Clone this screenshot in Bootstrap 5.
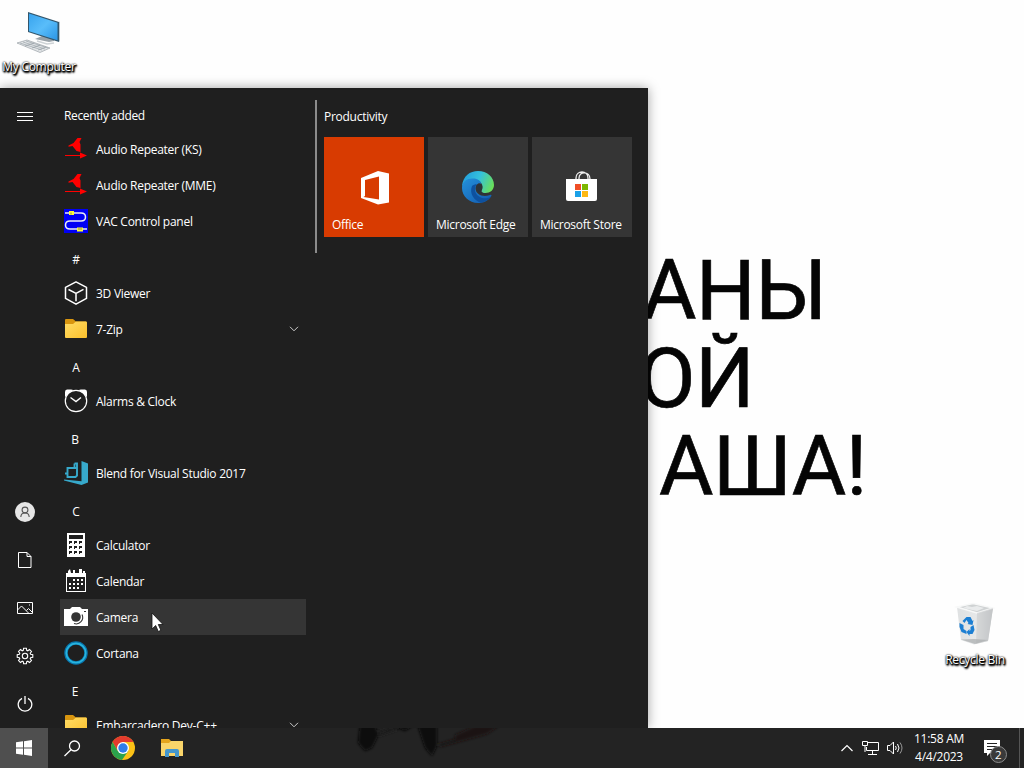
<!DOCTYPE html>
<html lang="en">
<head>
<meta charset="utf-8">
<meta name="viewport" content="width=device-width, initial-scale=1">
<title>Desktop</title>
<link href="https://cdn.jsdelivr.net/npm/bootstrap@5.3.0/dist/css/bootstrap.min.css" rel="stylesheet">
<style>
body{font-family:"Open Sans","Noto Sans",sans-serif;font-size:12px;line-height:16px;letter-spacing:-.27px;background:#fefefe}
svg{display:block;flex:none}
.wall-text{left:640px;top:247px;font:400 83.500px/88px Roboto,sans-serif;color:#050505;letter-spacing:-.5px;-webkit-text-stroke:.7px #050505}
.wall-text div{white-space:nowrap}
.w1{margin-left:2px}.w2{margin-left:-2px}.w3{margin-left:19px}
.desk-icon{width:80px}
.desk-label{color:#fff;line-height:14px;text-shadow:0 0 2px #000,1px 1px 2px #000,1px 1px 1px #000,0 1px 2px #000,1px 2px 2px #000;white-space:nowrap}
.start-menu{width:648px;height:640px;background:#1f1f1f;color:#fff;box-shadow:0 0 11px rgba(0,0,0,.36)}
.rail{width:50px}
.rail-item{height:48px}
.app-list{width:246px;margin-left:10px;padding-top:7px}
.app-row{height:36px;padding-left:4px;gap:8px;flex:none;white-space:nowrap}
.app-row span{padding-top:2px}
.app-row.hovered{background:#353535}
.app-row .chev{margin-left:auto;margin-right:7px}
.app-head{height:36px;width:32px;flex:none;padding-top:5px;white-space:nowrap}
.split{width:2px;height:153px;background:#8b8b8b;margin:12px 7px 0 9px}
.tile{width:100px;height:100px;background:#353535}
.tile svg{position:absolute;left:34px;top:34px}
.tile-name{position:absolute;left:8px;bottom:4px;white-space:nowrap}
.task-bar{height:40px;background:#232323;color:#fff}
.start-btn{width:48px;background:#4f4f4f}
.clock{width:60px;line-height:18px;white-space:nowrap}
.cursor{left:151px;top:612px}
.show-desk{width:1px;background:#555}
</style>
</head>
<body class="vh-100 overflow-hidden d-flex flex-column">
<main class="flex-grow-1 position-relative">
  <div class="wall-text position-absolute">
    <div class="w1">АНЫ</div><div class="w2">ОЙ</div><div class="w3">АША!</div>
  </div>

  <div class="desk-icon position-absolute d-flex flex-column align-items-center" style="left:-1px;top:10px">
    <svg width="48" height="48" viewBox="0 0 48 48">
      <defs><linearGradient id="scr" x1="0" y1="0" x2="1" y2="1"><stop offset="0" stop-color="#37a3ee"/><stop offset=".5" stop-color="#59bdfa"/><stop offset="1" stop-color="#2a95e6"/></linearGradient></defs>
      <path d="M20 29l14 3 5-1 0-2-12-3z" fill="#9aa3a9"/><path d="M22 31l10 3 7-1" fill="none" stroke="#cdd2d5" stroke-width="1.5"/>
      <path d="M13 2l31 10v20L13 22z" fill="#33566c"/><path d="M14 3.500l28.500 9.200v17.600L14 21.300z" fill="url(#scr)"/><path d="M44 12v20l1-1V11.500z" fill="#bcc8cf"/>
      <path d="M2 33l10-3 23 8-10 4.500z" fill="#e2e5e7" stroke="#9ba2a7" stroke-width=".7"/><path d="M5 33l22 7M8 32l22 7M11 31l22 7M10 36l9-3M17 38l8-3M23 40l8-3" stroke="#8d979d" stroke-width=".6"/>
    </svg>
    <div class="desk-label" style="margin-top:2px">My Computer</div>
  </div>

  <div class="desk-icon position-absolute d-flex flex-column align-items-center" style="left:935px;top:602px">
    <svg width="48" height="48" viewBox="0 0 48 48">
      <defs><linearGradient id="bin" x1="0" x2="1"><stop offset="0" stop-color="#dfe1e2"/><stop offset=".55" stop-color="#e6e8e9"/><stop offset="1" stop-color="#b9bcbe"/></linearGradient></defs>
      <path d="M6 5L22 2l20 4-5 33-14 3.500L10 38z" fill="url(#bin)"/>
      <path d="M6 5L22 1.500 42 6 26 11z" fill="#cfd2d3" stroke="#f7f8f8" stroke-width="1.500"/>
      <path d="M12 6l4-2 5 1 5-1 7 2-7 3z" fill="#e9ebec"/>
      <path d="M26 11l16-5-5 33-12 3z" fill="#c9cccd" opacity=".6"/><path d="M10 37.500L24 42l13-4-14-1z" fill="#a9acae" opacity=".7"/>
      <g fill="#1c7fd3" transform="translate(-1.500 -1)"><path d="M13 20l4-4h4l2 4 1-1-1 5-5-1 1-1-2-3-2 3z"/><path d="M10 22l4 2v4l3 2v3l-5-2-2-5z"/><path d="M24 24l1 5-2 4-3 0v2l-3-4 3-3v2l1-1 0-3z"/></g>
    </svg>
    <div class="desk-label" style="margin-top:3px">Recycle Bin</div>
  </div>

  <section class="start-menu position-absolute start-0 bottom-0 d-flex overflow-visible">
    <nav class="rail d-flex flex-column">
      <div class="rail-item d-flex justify-content-center" style="padding-top:24px"><svg width="16" height="10" stroke="#fff"><path d="M0 .5h16M0 4.500h16M0 8.500h16"/></svg></div>
      <div class="mt-auto rail-item d-flex align-items-center justify-content-center"><svg width="20" height="20"><circle cx="10" cy="10" r="10" fill="#e6e6e6"/><g fill="none" stroke="#555" stroke-width="1.100"><circle cx="10" cy="8" r="2.900"/><path d="M5.800 15c.3-5.300 8.100-5.300 8.400 0"/></g></svg></div>
      <div class="rail-item d-flex align-items-center justify-content-center"><svg width="16" height="16" fill="none" stroke="#fff"><path d="M1.500.5H10l4 4v11H1.500zM10 .5v4h4"/></svg></div>
      <div class="rail-item d-flex align-items-center justify-content-center"><svg width="16" height="12" fill="none" stroke="#fff"><path d="M.5.500h15v11H.5zM.5 8l4-4 7.500 7.500M9.500 8.500l2-2 4 4"/><path d="M12 3h1"/></svg></div>
      <div class="rail-item d-flex align-items-center justify-content-center"><svg width="18" height="18" viewBox="-9 -9 18 18" fill="none" stroke="#fff" stroke-width="1.100"><path id="gear"/><circle r="2.700"/></svg></div>
      <div class="rail-item d-flex align-items-center justify-content-center"><svg width="16" height="18" fill="none" stroke="#fff" stroke-width="1.300"><path d="M8 1v8M5 3.300a6.800 6.800 0 1 0 6 0"/></svg></div>
    </nav>

    <div class="app-list d-flex flex-column overflow-hidden">
      <div class="app-head d-flex align-items-center" style="padding-left:4px;padding-top:6px;letter-spacing:-.36px"><span>Recently added</span></div>
      <div class="app-row d-flex align-items-center"><svg width="24" height="24" fill="red"><path d="M4.500 8.500l5-2.500 4-5h4L15.500 5l1 2.500V15l-4-1-4-5-4 .8zM1 18h15v-2.500l7 3-7 3V19H1z"/></svg><span>Audio Repeater (KS)</span></div>
      <div class="app-row d-flex align-items-center"><svg width="24" height="24" fill="red"><path d="M4.500 8.500l5-2.500 4-5h4L15.500 5l1 2.500V15l-4-1-4-5-4 .8zM1 18h15v-2.500l7 3-7 3V19H1z"/></svg><span>Audio Repeater (MME)</span></div>
      <div class="app-row d-flex align-items-center"><svg width="24" height="24"><path fill="#0000f4" d="M0 0h24v24H0z"/><path d="M1 4h16c6 0 6 8 0 8H6c-6 0-6 8 0 8h17" fill="none" stroke="#e9ecf5" stroke-width="1.500"/><path d="M5 2h5v4H5zM13 18.500h6v4h-6z" fill="#ff3"/><path d="M7 3.500v2M15 19v2M17 19v2" stroke="#885"/></svg><span>VAC Control panel</span></div>
      <div class="app-head d-flex align-items-center justify-content-center">#</div>
      <div class="app-row d-flex align-items-center"><svg width="24" height="24" fill="none" stroke="#fff" stroke-width="1.500" stroke-linejoin="round"><path d="M12 .9l10.500 5.500v11L12 23.200 1.500 17.400v-11zM4.500 8.500L12 12.300l7.500-4M12 12.300v8"/></svg><span>3D Viewer</span></div>
      <div class="app-row d-flex align-items-center"><svg width="24" height="24"><defs><linearGradient id="fold" x1="0" x2="1" y2="1"><stop offset="0" stop-color="#ffdc66"/><stop offset="1" stop-color="#fbc02c"/></linearGradient></defs><path d="M1 3q0-1 1-1h7l3 2.500h10V9H1z" fill="#d8950f"/><path d="M1 7h8l3-2.500h10q1 0 1 1V20q0 1-1 1H2q-1 0-1-1z" fill="url(#fold)"/></svg><span>7-Zip</span><svg class="chev" width="10" height="6" fill="none" stroke="#ccc"><path d="M1 .8l4 4 4-4"/></svg></div>
      <div class="app-head d-flex align-items-center justify-content-center">A</div>
      <div class="app-row d-flex align-items-center"><svg width="24" height="24"><path d="M1 8V3q0-2.500 2-2.500h4q2 0 2 1zM23 8V3q0-2.500-2-2.500h-4q-2 0-2 1z" fill="#fff"/><circle cx="12" cy="12" r="10.700" fill="#1f1f1f" stroke="#fff" stroke-width="1.200"/><path d="M6.500 8.500L12 12.500l5-4" fill="none" stroke="#fff" stroke-width="1.400"/></svg><span>Alarms &amp; Clock</span></div>
      <div class="app-head d-flex align-items-center justify-content-center" style="padding-right:2px">B</div>
      <div class="app-row d-flex align-items-center"><svg width="24" height="24"><path d="M17.500 0L24 2.500v19L17.500 24 0 19.500v-1l17.500 1.700z" fill="#37a9cb"/><path d="M3.500 7H13v7.500L11.500 16H3.500zM10.500 2.500V6M1 12.500h2.500v3M10.500 2.500H13V7" fill="none" stroke="#37a9cb" stroke-width="1.900"/></svg><span>Blend for Visual Studio 2017</span></div>
      <div class="app-head d-flex align-items-center justify-content-center">C</div>
      <div class="app-row d-flex align-items-center"><svg width="24" height="24"><path d="M3 0h18v24H3z" fill="#fff"/><path d="M5 2h14v4H5z" fill="#1f1f1f"/><path d="M5 8h3v2H6v1H5zM10 8h3v2h-2v1h-1zM15 8h3v2h-2v1h-1zM5 13h3v2H6v1H5zM10 13h3v2h-2v1h-1zM15 13h3v2h-2v1h-1zM5 18h3v2H6v1H5zM10 18h3v2h-2v1h-1zM15 18h3v2h-2v1h-1z" fill="#1f1f1f"/></svg><span>Calculator</span></div>
      <div class="app-row d-flex align-items-center"><svg width="24" height="24"><path d="M2 4h2V2l2-2 1 4h2V1h2v3h4V0h3v4h1V2h2v2h1v19H2z" fill="#fff"/><path d="M3 8h18v14H3z" fill="#1f1f1f"/><g stroke="#fff" stroke-width="2" stroke-dasharray="2 2"><path d="M9 11h10M5 15h14M5 19h10"/></g></svg><span>Calendar</span></div>
      <div class="app-row hovered d-flex align-items-center"><svg width="24" height="24"><path d="M0 4h6l2-2h8l2 2h6v17H0z" fill="#fff"/><circle cx="12" cy="12" r="4.800" fill="#333"/><path d="M18 9.500a6.500 6.500 0 0 1-8 9" fill="none" stroke="#333" stroke-width="1.100"/><path d="M20 6h2v1h-2z" fill="#333"/></svg><span>Camera</span></div>
      <div class="app-row d-flex align-items-center"><svg width="24" height="24" fill="none"><circle cx="12" cy="12" r="10" stroke="#0876ae" stroke-width="3.500"/><circle cx="12" cy="12" r="9.700" stroke="#28b4dd" stroke-width="1.700"/></svg><span>Cortana</span></div>
      <div class="app-head d-flex align-items-center justify-content-center" style="padding-right:2px">E</div>
      <div class="app-row d-flex align-items-center"><svg width="24" height="24"><path d="M1 3q0-1 1-1h7l3 2.500h10V9H1z" fill="#d8950f"/><path d="M1 7h8l3-2.500h10q1 0 1 1V20q0 1-1 1H2q-1 0-1-1z" fill="url(#fold)"/></svg><span style="letter-spacing:-.22px">Embarcadero Dev-C++</span><svg class="chev" width="10" height="6" fill="none" stroke="#ccc"><path d="M1 .8l4 4 4-4"/></svg></div>
    </div>

    <div class="split"></div>
    <div class="d-flex flex-column">
      <div style="padding-top:21px;height:49px">Productivity</div>
      <div class="d-flex gap-1">
        <div class="tile position-relative" style="background:#d83b01"><svg width="34" height="34"><path d="M3 7L20 0l11 2.500v29L20 33.500 3 27z" fill="#fff"/><path d="M7 9l14-3.500v23L5.500 26 7 25z" fill="#d83b01"/></svg><span class="tile-name">Office</span></div>
        <div class="tile position-relative"><svg width="32" height="32" viewBox="0 0 32 32"><defs><linearGradient id="e1" x1="0" y1=".3" x2="1" y2=".6"><stop offset="0" stop-color="#229ddc"/><stop offset=".5" stop-color="#35c1dc"/><stop offset="1" stop-color="#6adf58"/></linearGradient><linearGradient id="e2" x1="0" y1="0" x2="1" y2="1"><stop offset="0" stop-color="#2491db"/><stop offset="1" stop-color="#1259ae"/></linearGradient></defs>
          <path d="M0 15C1 5 8 0 16 0c9 0 16 6 16 14 0 5-4 8-8.500 8-4 0-5-1.500-4-3 3-5-1-10-7-10C6 9 1 12 0 16z" fill="url(#e1)"/>
          <path d="M0 17C0 10 6 7 11 7.500c5 0 8 2.500 8.500 5.500-3-2-6 1-6 4.500 0 5.500 7 9.500 14.500 6.500 1.500-.5 2 .5 1 1.500C26 30 21 32 16 32 7 32 0 25 0 17z" fill="url(#e2)"/><path d="M10 15c-3 7 2 15 9 16.700 4-.5 7.500-2.700 10-6-7 4-15 0-16-6.500-.4-2 .5-4.500 2-6-2 0-4 .5-5 1.800z" fill="#0e519f"/><path d="M14 16c1-3 4-3.500 5.500-2 1.500 2 1 4 .2 5.500-.8 1.500.5 2.500 3.500 2.700l5 .8c-7 3-14-1-14.200-7z" fill="#2d3338"/></svg><span class="tile-name">Microsoft Edge</span></div>
        <div class="tile position-relative"><svg width="32" height="32"><path d="M10 10V7c0-8 12-8 12 0v3M13 10V7c0-7 11-7 11 1" fill="none" stroke="#eee" stroke-width="1.300"/><path d="M0 8h31v20q0 2-2 2H2q-2 0-2-2z" fill="#fff"/><path fill="#f04e26" d="M9 13h6v6H9z"/><path fill="#7db700" d="M16 13h6v6h-6z"/><path fill="#1ba1e8" d="M9 20h6v6H9z"/><path fill="#fdb813" d="M16 20h6v6h-6z"/></svg><span class="tile-name">Microsoft Store</span></div>
      </div>
    </div>
  </section>
  <svg class="cursor position-absolute" width="13" height="21"><path d="M1 1v16l3.700-3.500 2.600 6 2.600-1.200-2.600-5.800H12z" fill="#fff" stroke="#111" stroke-width=".8"/></svg>
</main>

<footer class="task-bar d-flex align-items-center position-relative">
  <svg class="position-absolute" style="left:350px;top:0" width="180" height="32"><defs><filter id="soft"><feGaussianBlur stdDeviation="1.500"/></filter></defs><g filter="url(#soft)" fill="#090909"><path d="M10-4h15l3 12-6 12-7 3-7-8zM38-4h28l-11 7zM67-4h20v22l-5 10-7-8z"/><path d="M88 16l17-5 0-4 20-9h24l-12 8-25 7-22 6z" fill="#15110f" opacity=".8"/><path d="M29 8l20-7-9-1-14 4z" fill="#1a1a1a"/></g></svg>
  <div class="start-btn h-100 d-flex align-items-center justify-content-center"><svg width="16" height="16" fill="#fff"><path d="M0 2.300L7 1.300v6.200H0zM8 1.200L16 0v7.500H8zM0 8.500h7v6.200L0 13.700zM8 8.500h8V16l-8-1.200z"/></svg></div>
  <svg style="margin-left:16px" width="17" height="17" fill="none" stroke="#fff" stroke-width="1.300"><circle cx="10.500" cy="6" r="5"/><path d="M7 9.700L.5 16"/></svg>
  <svg style="margin-left:30px" width="24" height="24" viewBox="-12 -12 24 24"><circle r="12" fill="#fbc116"/><path d="M-10.400-6A12 12 0 0 1 10.400-6H0L-5.200 3z" fill="#e33b2e"/><path d="M-10.400-6A12 12 0 0 0-1 12L5.200 3-5.200 3z" fill="#2ba24c"/><circle r="6" fill="#fff"/><circle r="4.700" fill="#2f7de9"/></svg>
  <svg style="margin-left:26px" width="22" height="20"><path d="M0 1h8l2 2h11v5H0z" fill="#e5a51d"/><path d="M0 5h8l2-2h12v15H0z" fill="#fad56a"/><path d="M4 19v-6q0-2 2-2h10q2 0 2 2v6h-4v-4H8v4z" fill="#4597cd"/></svg>
  <svg style="margin-left:657px" width="14" height="8" fill="none" stroke="#fff" stroke-width="1.200"><path d="M1.500 7L7 1.500 12.500 7"/></svg>
  <svg style="margin-left:8px" width="18" height="14" fill="none" stroke="#fff"><path d="M6 1.500h10.500v8H4.500V6M10.500 10v3M6 13.500h9M.5.500h5v4h-5zM3 5v6"/></svg>
  <svg style="margin-left:7px" width="17" height="14" fill="none" stroke="#fff"><path d="M.5 4.500H3L6.500 1v12L3 9.500H.5zM8.500 5q1.500 2 0 4M10.500 3q3 4 0 8"/><path d="M13 1.500q4 5.500 0 11" stroke="#999"/></svg>
  <div class="clock text-center" style="margin-left:5px;margin-right:1px"><div>11:58 AM</div><div>4/4/2023</div></div>
  <svg style="margin-left:13px;margin-top:4px" width="26" height="26"><path d="M1 3h16v13H7l-3 3v-3H1z" fill="#fff"/><path d="M4 6.500h10M4 9.500h10M4 12.500h7" stroke="#232323"/><circle cx="15.500" cy="17.500" r="8" fill="#3a3a3a" stroke="#8c8c8c"/><text x="12" y="21.800" fill="#fff" font-size="11.500">2</text></svg>
  <div class="show-desk position-absolute h-100" style="left:1019px"></div>
</footer>
<script src="https://cdn.jsdelivr.net/npm/bootstrap@5.3.0/dist/js/bootstrap.bundle.min.js"></script>
<script>
// Eight-toothed settings gear outline
let d = '';
for (let i = 0; i < 8; i++) {
  [[-17, 5.900], [-10, 7.900], [10, 7.900], [17, 5.900]].forEach(([a, r], k) => {
    const t = (i * 45 + a) * Math.PI / 180;
    d += (i + k ? 'L' : 'M') + (r * Math.cos(t)).toFixed(2) + ' ' + (r * Math.sin(t)).toFixed(2);
  });
}
document.getElementById('gear').setAttribute('d', d + 'Z');
</script>
</body>
</html>
